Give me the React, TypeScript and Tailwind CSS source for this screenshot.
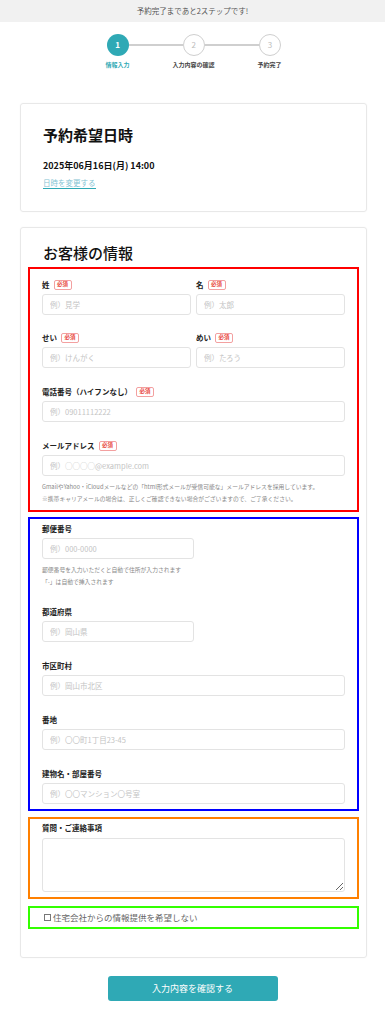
import React from 'react';

const font = { fontFamily: '"Noto Sans CJK JP", "Noto Sans", sans-serif' };

function Req() {
  return (
    <span className="ml-[4px] inline-flex h-[10px] w-[18px] items-center justify-center rounded-[2px] border border-[#f3a0a0] text-[5.5px] font-bold leading-none text-[#e84a3f]">
      必須
    </span>
  );
}

function Label({ text, req }: { text: string; req?: boolean }) {
  return (
    <div className="flex h-[10px] items-center text-[7.5px] font-bold leading-none text-[#222]">
      {text}
      {req && <Req />}
    </div>
  );
}

function Input({ ph, half }: { ph: string; half?: boolean }) {
  return (
    <input
      placeholder={ph}
      className={`mt-[4px] block h-[21px] rounded-[3px] border border-[#e3e3e3] bg-white px-[7px] text-[7.5px] outline-none placeholder:text-[#c4c4c4] ${half ? 'w-[152px]' : 'w-full'}`}
    />
  );
}

function Field({ label, ph, req, half, className = '' }: { label: string; ph: string; req?: boolean; half?: boolean; className?: string }) {
  return (
    <div className={className}>
      <Label text={label} req={req} />
      <Input ph={ph} half={half} />
    </div>
  );
}

export default function App() {
  return (
    <div className="min-h-screen w-[385px] bg-white pb-[23px]" style={font}>
      {/* top bar */}
      <div className="flex h-[22px] items-center justify-center bg-[#f1f1f1] text-[7.5px] text-[#555]">
        予約完了まであと2ステップです!
      </div>

      {/* stepper */}
      <div className="ml-[106.5px] mt-[12px] flex w-[174.5px] items-center">
        <div className="flex h-[22px] w-[22px] items-center justify-center rounded-full bg-[#2fa9b5] text-[8px] font-bold text-white">1</div>
        <div className="h-[1.5px] flex-1 bg-[#cfcfcf]" />
        <div className="flex h-[22px] w-[22px] items-center justify-center rounded-full border-[1.5px] border-[#cfcfcf] text-[8px] text-[#bdbdbd]">2</div>
        <div className="h-[1.5px] flex-1 bg-[#cfcfcf]" />
        <div className="flex h-[22px] w-[22px] items-center justify-center rounded-full border-[1.5px] border-[#cfcfcf] text-[8px] text-[#bdbdbd]">3</div>
      </div>
      <div className="ml-[79.5px] mt-[5px] grid h-[8px] w-[228px] grid-cols-3 text-center text-[6px] font-bold leading-[8px]">
        <span className="text-[#2fa9b5]">情報入力</span>
        <span className="text-[#444]">入力内容の確認</span>
        <span className="text-[#444]">予約完了</span>
      </div>

      {/* reservation date card */}
      <div className="ml-[20px] mt-[34px] flex h-[109px] w-[347px] flex-col items-start rounded-[3px] border border-[#e8e8e8] px-[22px] pt-[20px] shadow-[0_0_2px_rgba(0,0,0,0.04)]">
        <h2 className="flex h-[20px] items-center text-[15px] font-bold leading-none text-[#111]">予約希望日時</h2>
        <p className="mt-[15px] flex h-[12px] items-center text-[9px] font-bold leading-none text-[#111]">2025年06月16日(月) 14:00</p>
        <a className="mt-[7px] flex h-[11px] items-center border-b border-[#2fa9b5] text-[7.5px] leading-none text-[#84c3d3]">日時を変更する</a>
      </div>

      {/* customer info card */}
      <div className="ml-[20px] mt-[15px] w-[347px] rounded-[3px] border border-[#e8e8e8] px-[7px] pb-[28px] pt-[14px] shadow-[0_0_2px_rgba(0,0,0,0.04)]">
        <h2 className="flex h-[20px] items-center pl-[15px] text-[15px] font-medium leading-none text-[#111]">お客様の情報</h2>

        {/* red */}
        <div className="mt-[5px] border-2 border-[#ff0000] px-[12px] pb-[6px] pt-[11px]">
          <div className="grid grid-cols-2 gap-x-[5px]">
            <Field label="姓" req ph="例）見学" />
            <Field label="名" req ph="例）太郎" />
          </div>
          <div className="mt-[18px] grid grid-cols-2 gap-x-[5px]">
            <Field label="せい" req ph="例）けんがく" />
            <Field label="めい" req ph="例）たろう" />
          </div>
          <Field className="mt-[19px]" label="電話番号（ハイフンなし）" req ph="例）09011112222" />
          <Field className="mt-[19px]" label="メールアドレス" req ph="例）○○○○@example.com" />
          <div className="mt-[5px] text-[5.8px] leading-[11.5px] text-[#888]">
            <p>GmailやYahoo・iCloudメールなどの「html形式メールが受信可能な」メールアドレスを採用しています。</p>
            <p>※携帯キャリアメールの場合は、正しくご確認できない場合がございますので、ご了承ください。</p>
          </div>
        </div>

        {/* blue */}
        <div className="mt-[5px] border-2 border-[#0000ff] px-[12px] pb-[5px] pt-[5px]">
          <Field label="郵便番号" ph="例）000-0000" half />
          <div className="mt-[5px] text-[5.8px] leading-[12px] text-[#888]">
            <p>郵便番号を入力いただくと自動で住所が入力されます</p>
            <p>「-」は自動で挿入されます</p>
          </div>
          <Field className="mt-[19px]" label="都道府県" ph="例）岡山県" half />
          <Field className="mt-[19px]" label="市区町村" ph="例）岡山市北区" />
          <Field className="mt-[19px]" label="番地" ph="例）〇〇町1丁目23-45" />
          <Field className="mt-[19px]" label="建物名・部屋番号" ph="例）〇〇マンション〇号室" />
        </div>

        {/* orange */}
        <div className="mt-[6px] border-2 border-[#ff8000] px-[12px] pb-[5px] pt-[4px]">
          <Label text="質問・ご連絡事項" />
          <textarea className="mt-[5px] block h-[54px] w-full rounded-[3px] border border-[#e3e3e3] outline-none" />
        </div>

        {/* green */}
        <div className="mt-[7px] flex h-[23px] items-center border-2 border-[#33ff00] pl-[14px]">
          <label className="flex items-center text-[8.5px] leading-none text-[#666]">
            <span className="mr-[2px] inline-block h-[7px] w-[7px] border border-[#777]" />
            住宅会社からの情報提供を希望しない
          </label>
        </div>
      </div>

      {/* button */}
      <div className="mt-[18px] flex justify-center">
        <button type="button" className="h-[25px] w-[170px] rounded-[3px] bg-[#2fa9b5] text-[9px] text-white">
          入力内容を確認する
        </button>
      </div>
    </div>
  );
}
